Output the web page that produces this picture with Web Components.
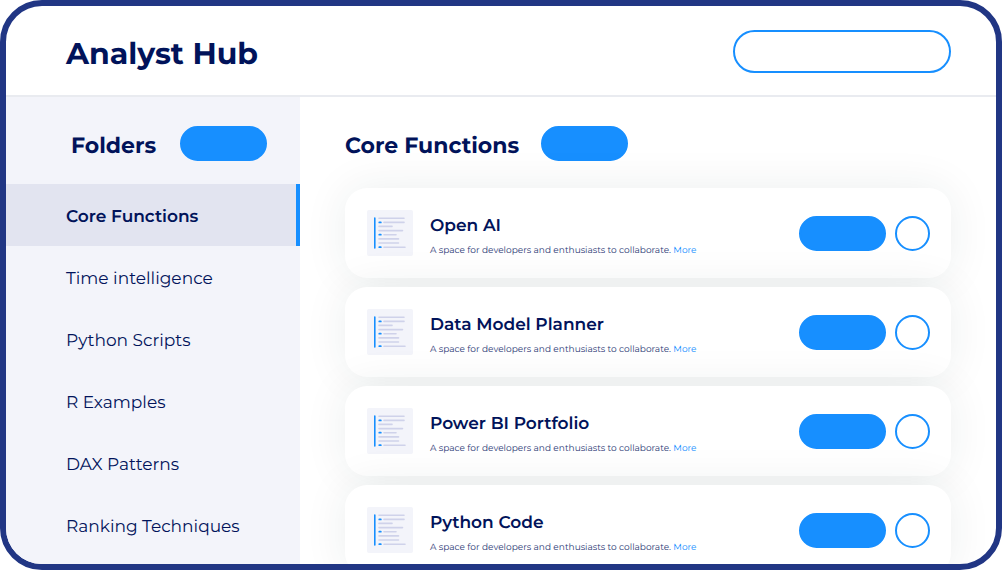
<!DOCTYPE html>
<html lang="en">
<head>
<meta charset="utf-8">
<meta name="viewport" content="width=device-width, initial-scale=1">
<title>Analyst Hub</title>
<style>
    :root {
        --frame: #213684;
        --ink: #01135a;
        --blue: #178fff;
        --panel: #f3f4fa;
        --panel-active: #e2e4f0;
    }
    body {
        margin: 0;
        background: #fff;
        color: var(--ink);
        font-family: Montserrat, Inter, sans-serif;
        text-rendering: geometricPrecision;
    }
</style>
</head>
<body>
<hub-app>
    <hub-header slot="header">Analyst Hub</hub-header>
    <folder-nav slot="sidebar">
        <folder-item active>Core Functions</folder-item>
        <folder-item>Time intelligence</folder-item>
        <folder-item>Python Scripts</folder-item>
        <folder-item>R Examples</folder-item>
        <folder-item>DAX Patterns</folder-item>
        <folder-item>Ranking Techniques</folder-item>
    </folder-nav>
    <card-list heading="Core Functions">
        <script-card name="Open AI"></script-card>
        <script-card name="Data Model Planner"></script-card>
        <script-card name="Power BI Portfolio"></script-card>
        <script-card name="Python Code"></script-card>
    </card-list>
</hub-app>

<script>
class HubApp extends HTMLElement {
    constructor() {
        super();
        this.attachShadow({ mode: 'open' });
        this.shadowRoot.innerHTML = `
            <style>
                :host {
                    display: grid;
                    grid-template: auto minmax(0, 1fr) / 294px minmax(0, 1fr);
                    box-sizing: border-box;
                    height: 100vh;
                    border: 6px solid var(--frame);
                    border-radius: 42px;
                    overflow: hidden;
                }
                header { grid-column: 1 / -1; border-bottom: 2px solid #e9ebf0; }
                aside { background: var(--panel); overflow: hidden; }
                main { overflow: hidden; }
            </style>
            <header><slot name="header"></slot></header>
            <aside><slot name="sidebar"></slot></aside>
            <main><slot></slot></main>
        `;
    }
}

class HubHeader extends HTMLElement {
    constructor() {
        super();
        this.attachShadow({ mode: 'open' });
        this.shadowRoot.innerHTML = `
            <style>
                :host {
                    display: flex;
                    align-items: center;
                    justify-content: space-between;
                    padding: 24px 45px 22px 60px;
                }
                h1 { margin: 0; padding-top: 5px; font-size: 30px; line-height: 38px; font-weight: 700; }
                input {
                    box-sizing: border-box;
                    width: 218px;
                    height: 43px;
                    padding: 0 20px;
                    border: 2px solid var(--blue);
                    border-radius: 22px;
                    background: #fff;
                    color: inherit;
                    font: inherit;
                }
            </style>
            <h1><slot></slot></h1>
            <input type="search" aria-label="Search">
        `;
    }
}

class PillButton extends HTMLElement {
    constructor() {
        super();
        this.attachShadow({ mode: 'open' });
        this.shadowRoot.innerHTML = `
            <style>
                :host { display: block; flex: none; }
                button {
                    display: block;
                    box-sizing: border-box;
                    width: 87px;
                    height: 35px;
                    padding: 0;
                    border: 2px solid var(--blue);
                    border-radius: 18px;
                    background: var(--blue);
                    cursor: pointer;
                }
                :host([round]) button { width: 35px; background: #fff; }
            </style>
            <button type="button" aria-label="${this.getAttribute('label')}"></button>
        `;
    }
}

class FolderNav extends HTMLElement {
    constructor() {
        super();
        this.attachShadow({ mode: 'open' });
        this.shadowRoot.innerHTML = `
            <style>
                :host { display: block; }
                .head {
                    display: flex;
                    align-items: center;
                    justify-content: space-between;
                    padding: 29px 33px 23px 65px;
                }
                h2 { margin: 0; padding-top: 5px; font-size: 22px; line-height: 30px; font-weight: 700; }
            </style>
            <div class="head">
                <h2>Folders</h2>
                <pill-button label="New folder"></pill-button>
            </div>
            <nav aria-label="Folders"><slot></slot></nav>
        `;
    }
}

class FolderItem extends HTMLElement {
    constructor() {
        super();
        this.attachShadow({ mode: 'open' });
        this.shadowRoot.innerHTML = `
            <style>
                :host { display: block; }
                a {
                    display: block;
                    padding: 4px 0 0 60px;
                    color: inherit;
                    font-size: 17px;
                    line-height: 58px;
                    font-weight: 400;
                    text-decoration: none;
                }
                :host([active]) a {
                    border-right: 4px solid var(--blue);
                    background: var(--panel-active);
                    font-weight: 600;
                }
            </style>
            <a href="#"><slot></slot></a>
        `;
    }
}

class CardList extends HTMLElement {
    constructor() {
        super();
        this.attachShadow({ mode: 'open' });
        this.shadowRoot.innerHTML = `
            <style>
                :host { display: block; padding: 29px 45px 0; }
                .head { display: flex; align-items: center; gap: 22px; margin-bottom: 27px; }
                h2 { margin: 0; padding-top: 5px; font-size: 22px; line-height: 30px; font-weight: 700; }
                .cards { display: grid; gap: 9px; }
            </style>
            <div class="head">
                <h2>${this.getAttribute('heading')}</h2>
                <pill-button label="New script"></pill-button>
            </div>
            <div class="cards"><slot></slot></div>
        `;
    }
}

class ScriptCard extends HTMLElement {
    constructor() {
        super();
        this.attachShadow({ mode: 'open' });
        this.shadowRoot.innerHTML = `
            <style>
                :host {
                    display: flex;
                    align-items: center;
                    padding: 22px 21px 22px 22px;
                    border-radius: 22px;
                    background: #fff;
                    box-shadow: 0 0 44px rgba(20, 50, 45, 0.08);
                }
                svg { display: block; flex: none; width: 46px; height: 46px; margin-right: 17px; }
                .text { flex: 1; min-width: 0; padding-top: 5px; }
                h3 { margin: 0; font-size: 17px; line-height: 22px; font-weight: 600; }
                p { margin: 0; padding-top: 9px; font-size: 9px; line-height: 10px; color: #2c3a76; }
                a { color: var(--blue); text-decoration: none; }
                .actions { display: flex; gap: 9px; }
            </style>
            <svg viewBox="0 0 46 46" aria-hidden="true">
                <rect width="46" height="46" rx="2" fill="#f3f4fa"/>
                <path d="M7.8 8v30" stroke="#178fff" stroke-width="1.6" stroke-linecap="round"/>
                <g stroke="#cfd2ea" stroke-width="1.6" stroke-linecap="round">
                    <path d="M12 8.3h25M17 12.4h20M12 16.4h13M12 20.6h23.500M17 24.700h12M12 28.900h19.500M12 33h19.500M17 37.200h21"/>
                </g>
                <path d="M12.300 12.400h1.500M12.300 24.700h1.500M12.300 37.200h1.500" stroke="#178fff" stroke-width="1.8" stroke-linecap="round"/>
            </svg>
            <div class="text">
                <h3>${this.getAttribute('name')}</h3>
                <p>A space for developers and enthusiasts to collaborate. <a href="#">More</a></p>
            </div>
            <div class="actions">
                <pill-button label="Open"></pill-button>
                <pill-button round label="Options"></pill-button>
            </div>
        `;
    }
}

customElements.define('pill-button', PillButton);
customElements.define('hub-app', HubApp);
customElements.define('hub-header', HubHeader);
customElements.define('folder-nav', FolderNav);
customElements.define('folder-item', FolderItem);
customElements.define('card-list', CardList);
customElements.define('script-card', ScriptCard);
</script>
</body>
</html>
